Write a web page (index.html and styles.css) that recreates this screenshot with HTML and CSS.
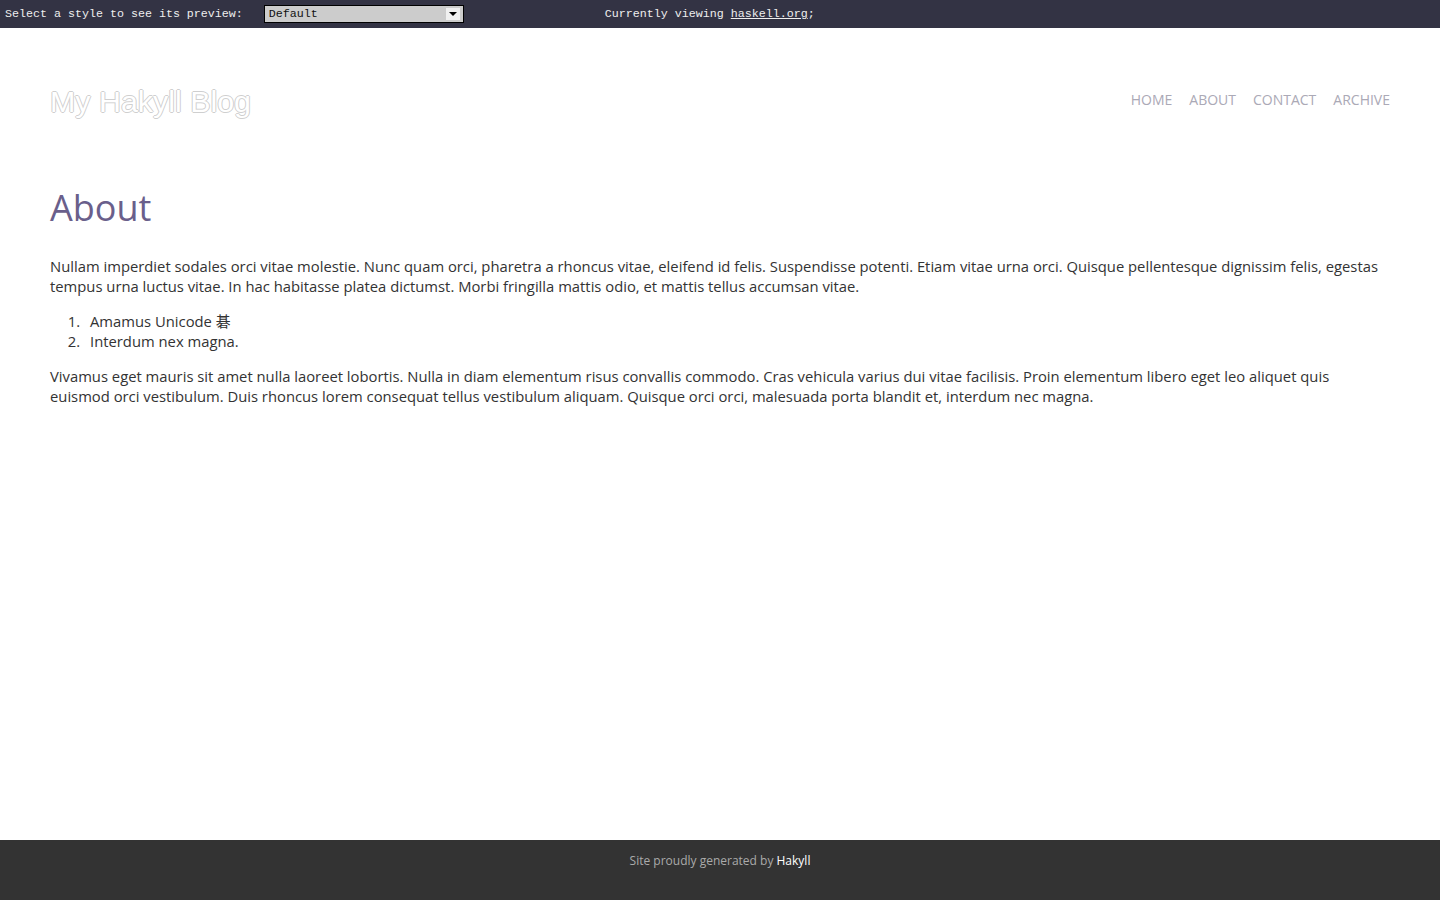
FILE: index.html
```html
<!DOCTYPE html>
<html lang="en">
<head>
<meta charset="utf-8">
<title>My Hakyll Blog - About</title>
<link rel="stylesheet" href="styles.css">
</head>
<body>
<div class="topbar">
  <span class="topbar-label">Select a style to see its preview:</span>
  <div class="select">
    <span class="select-value">Default</span>
    <span class="select-arrow"><span class="tri"></span></span>
  </div>
  <span class="viewing">Currently viewing <a href="#">haskell.org</a>;</span>
</div>
<div class="page">
  <header class="header">
    <a class="logo" href="#">My Hakyll Blog</a>
    <nav class="nav">
      <a href="#">Home</a>
      <a href="#">About</a>
      <a href="#">Contact</a>
      <a href="#">Archive</a>
    </nav>
  </header>
  <main class="content">
    <h1 class="title">About</h1>
    <p>Nullam imperdiet sodales orci vitae molestie. Nunc quam orci, pharetra a rhoncus vitae, eleifend id felis. Suspendisse potenti. Etiam vitae urna orci. Quisque pellentesque dignissim felis, egestas tempus urna luctus vitae. In hac habitasse platea dictumst. Morbi fringilla mattis odio, et mattis tellus accumsan vitae.</p>
    <ol>
      <li>Amamus Unicode 碁</li>
      <li>Interdum nex magna.</li>
    </ol>
    <p>Vivamus eget mauris sit amet nulla laoreet lobortis. Nulla in diam elementum risus convallis commodo. Cras vehicula varius dui vitae facilisis. Proin elementum libero eget leo aliquet quis euismod orci vestibulum. Duis rhoncus lorem consequat tellus vestibulum aliquam. Quisque orci orci, malesuada porta blandit et, interdum nec magna.</p>
  </main>
</div>
<footer class="footer">
  Site proudly generated by <a href="#">Hakyll</a>
</footer>
</body>
</html>
```
FILE: styles.css
```css
html, body {
  margin: 0;
  padding: 0;
  height: 100%;
}
body {
  background: #fff;
  font-family: "Open Sans", "Noto Sans CJK JP", sans-serif;
  color: #333;
  display: flex;
  flex-direction: column;
}
.topbar {
  height: 28px;
  background: #333344;
  color: #eee;
  font-family: "Liberation Mono", "Courier New", monospace;
  font-size: 11.67px;
  display: flex;
  align-items: center;
  padding-left: 5px;
  flex-shrink: 0;
}
.topbar-label {
  margin-right: 21px;
}
.select {
  width: 198px;
  height: 16px;
  border: 1px solid #000;
  background: #cccccc;
  color: #111;
  display: flex;
  align-items: center;
  justify-content: space-between;
  box-sizing: content-box;
}
.select-value {
  padding-left: 4px;
}
.select-arrow {
  width: 14px;
  height: 12px;
  margin-right: 3px;
  background: #f0f0f0;
  display: flex;
  align-items: center;
  justify-content: center;
}
.tri {
  width: 0;
  height: 0;
  border-left: 4px solid transparent;
  border-right: 4px solid transparent;
  border-top: 4px solid #000;
}
.viewing {
  margin-left: 141px;
}
.viewing a {
  color: #eee;
  text-decoration: underline;
}
.page {
  flex: 1;
  padding: 0 50px;
}
.header {
  display: flex;
  justify-content: space-between;
  align-items: flex-start;
  padding-top: 57px;
}
.logo {
  font-family: "Liberation Sans", Arial, sans-serif;
  font-size: 30.4px;
  line-height: 33px;
  color: #fff;
  text-shadow: -1px 0 #cfcfcf, 1px 0 #cfcfcf, 0 -1px #cfcfcf, 0 1px #cfcfcf;
  text-decoration: none;
}
.nav {
  display: flex;
  gap: 17px;
  margin-top: 5px;
}
.nav a {
  font-size: 14px;
  line-height: 20px;
  text-transform: uppercase;
  color: #aba9b6;
  text-decoration: none;
}
.content {
  font-size: 14.8px;
  line-height: 20px;
}
.title {
  font-size: 36px;
  line-height: 44px;
  font-weight: normal;
  color: #6a5f8b;
  margin: 68px 0 26px;
}
.content p {
  margin: 0 0 15px;
}
.content ol {
  margin: 0 0 15px;
  padding-left: 40px;
}
.content li::marker {
  content: counter(list-item) ".\2002\2009";
}
.footer {
  height: 60px;
  flex-shrink: 0;
  background: #333333;
  color: #aaa;
  font-size: 12px;
  text-align: center;
  line-height: 20px;
  padding-top: 11px;
  box-sizing: border-box;
}
.footer a {
  color: #fff;
  text-decoration: none;
}
```
